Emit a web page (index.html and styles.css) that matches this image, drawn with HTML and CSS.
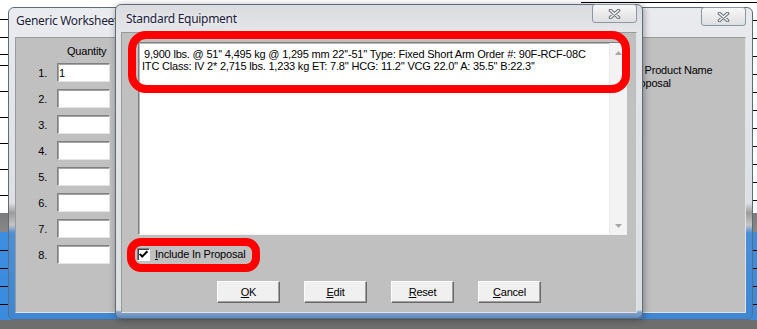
FILE: index.html
```html
<!DOCTYPE html>
<html lang="en">
<head>
  <meta charset="UTF-8" />
  <title>Standard Equipment</title>
  <meta name="viewport" content="width=device-width, initial-scale=1.0" />
  <link rel="stylesheet" href="styles.css">
</head>
<body>
  <div class="desktop">
    <div class="grid grid-left"></div>
    <div class="grid grid-right"></div>
    <div class="topline"></div>

    <!-- window behind -->
    <div class="window worksheet-win">
      <div class="titlebar">
        <span class="title">Generic Worksheet</span>
        <button class="close-btn">
          <svg width="13" height="10" viewBox="0 0 13 10"><path d="M2.5 1.5 L10.5 8.5 M10.5 1.5 L2.5 8.5" stroke="#6a7079" stroke-width="3.6" stroke-linecap="round"/><path d="M2.5 1.5 L10.5 8.5 M10.5 1.5 L2.5 8.5" stroke="#f4f4f4" stroke-width="1.6" stroke-linecap="round"/></svg>
        </button>
      </div>
      <div class="client worksheet">
        <div class="qty-col">
          <div class="qty-head">Quantity</div>
          <div class="qty-row"><span class="num">1.</span><input class="field" type="text" value="1"></div>
          <div class="qty-row"><span class="num">2.</span><input class="field" type="text"></div>
          <div class="qty-row"><span class="num">3.</span><input class="field" type="text"></div>
          <div class="qty-row"><span class="num">4.</span><input class="field" type="text"></div>
          <div class="qty-row"><span class="num">5.</span><input class="field" type="text"></div>
          <div class="qty-row"><span class="num">6.</span><input class="field" type="text"></div>
          <div class="qty-row"><span class="num">7.</span><input class="field" type="text"></div>
          <div class="qty-row"><span class="num">8.</span><input class="field" type="text"></div>
        </div>
        <div class="opts">Show Product Name in Proposal</div>
      </div>
    </div>

    <!-- active dialog -->
    <div class="window equip-win">
      <div class="titlebar">
        <span class="title">Standard Equipment</span>
        <button class="close-btn">
          <svg width="13" height="10" viewBox="0 0 13 10"><path d="M2.5 1.5 L10.5 8.5 M10.5 1.5 L2.5 8.5" stroke="#6a7079" stroke-width="3.6" stroke-linecap="round"/><path d="M2.5 1.5 L10.5 8.5 M10.5 1.5 L2.5 8.5" stroke="#f4f4f4" stroke-width="1.6" stroke-linecap="round"/></svg>
        </button>
      </div>
      <div class="client equip">
        <div class="memo">
          <div class="memo-text">
            <div class="line first">9,900 lbs. @ 51'' 4,495 kg @ 1,295 mm 22''-51'' Type: Fixed Short Arm Order #: 90F-RCF-08C</div>
            <div class="line">ITC Class: IV 2* 2,715 lbs. 1,233 kg ET: 7.8'' HCG: 11.2'' VCG 22.0'' A: 35.5'' B:22.3''</div>
          </div>
          <div class="memo-scroll">
            <svg width="7" height="4" viewBox="0 0 7 4"><polygon points="3.5,0 7,4 0,4" fill="#a6a6a6"/></svg>
            <svg width="7" height="4" viewBox="0 0 7 4"><polygon points="0,0 7,0 3.5,4" fill="#a6a6a6"/></svg>
          </div>
        </div>
        <label class="check-row">
          <span class="check-box">
            <svg width="11" height="11" viewBox="0 0 11 11"><path d="M1.8 4.8 L4.2 7.6 L9.4 2.2" fill="none" stroke="#000" stroke-width="2"/></svg>
          </span>
          <span><u>I</u>nclude In Proposal</span>
        </label>
        <div class="btn-row">
          <button class="btn"><u>O</u>K</button>
          <button class="btn"><u>E</u>dit</button>
          <button class="btn"><u>R</u>eset</button>
          <button class="btn"><u>C</u>ancel</button>
        </div>
      </div>
    </div>

    <!-- red annotation marks -->
    <div class="mark mark-memo"></div>
    <div class="mark mark-check"></div>
  </div>
</body>
</html>
```

FILE: styles.css
```css
* {
  box-sizing: border-box;
  margin: 0;
  padding: 0;
}

body {
  width: 757px;
  height: 329px;
  overflow: hidden;
  font-family: "Liberation Sans", Arial, sans-serif;
  font-size: 11px;
  letter-spacing: -0.2px;
  color: #000;
}

.desktop {
  position: relative;
  width: 757px;
  height: 329px;
  background: linear-gradient(to bottom,
    #ffffff 0, #ffffff 213px,
    #7b7b7b 213px, #888888 232px,
    #3d8ee0 232px, #3a8ade 320px,
    #6e6e6e 320px, #6e6e6e 100%);
}

/* table lines of the app behind */
.grid {
  position: absolute;
  top: 0;
  height: 320px;
}

.grid-left {
  left: 0;
  width: 8px;
  background:
    linear-gradient(#000, #000) 0 19px / 100% 1px no-repeat,
    linear-gradient(#000, #000) 0 37px / 100% 1px no-repeat,
    linear-gradient(#000, #000) 0 54px / 100% 1px no-repeat,
    repeating-linear-gradient(to bottom, #000 0 1px, transparent 1px 26px) 0 65px / 100% 140px no-repeat,
    repeating-linear-gradient(to bottom, transparent 0 17px, #000 17px 18px) 0 233px / 100% 87px no-repeat;
}

.grid-right {
  left: 752px;
  width: 5px;
  background:
    repeating-linear-gradient(to bottom, #000 0 1px, transparent 1px 18px) 0 2px / 100% 205px no-repeat,
    repeating-linear-gradient(to bottom, transparent 0 17px, #000 17px 18px) 0 233px / 100% 87px no-repeat;
}

.topline {
  position: absolute;
  left: 581px;
  top: 2px;
  width: 176px;
  height: 1px;
  background: #000;
}

/* Aero basic style windows */
.window {
  position: absolute;
  display: flex;
  flex-direction: column;
  border: 1px solid #5f6b79;
  border-radius: 6px;
}

.worksheet-win {
  left: 8px;
  top: 7px;
  width: 745px;
  height: 313px;
  padding: 0 6px 6px;
  background: linear-gradient(to bottom,
    #e9ebee 0, #dcdfe3 195px,
    #9c9c9c 205px, #c4c4c4 217px,
    #4b8fd6 225px, #3c86d4 100%);
}

.equip-win {
  left: 115px;
  top: 4px;
  width: 528px;
  height: 315px;
  padding: 0 5px 5px;
  background: linear-gradient(to bottom,
    #d9dbde 0, #e3e5e8 24px, #dcdfe2 calc(100% - 8px),
    #86a3c8 calc(100% - 6px), #5f89bf 100%);
  box-shadow: 1px 1px 7px rgba(0, 0, 0, 0.35);
}

.titlebar {
  display: flex;
  justify-content: space-between;
  align-items: flex-start;
}

.worksheet-win .titlebar {
  height: 29px;
}

.equip-win .titlebar {
  height: 27px;
}

.title {
  font-family: "Noto Sans", "Open Sans", sans-serif;
  font-size: 12px;
  line-height: 16px;
  letter-spacing: -0.3px;
  color: #1c1c3c;
  text-shadow: 0 0 5px #fff;
}

.worksheet-win .title {
  padding: 5px 0 0 1px;
}

.equip-win .title {
  padding: 6px 0 0 5px;
}

.close-btn {
  width: 45px;
  height: 19px;
  margin-top: -1px;
  border: 1px solid #8d96a2;
  border-radius: 3px;
  background: linear-gradient(to bottom, #f7f7f7, #dedfe1);
  display: flex;
  align-items: center;
  justify-content: center;
}

.client {
  flex: 1;
  background-color: #c0c0c0;
  border: 1px solid;
  border-color: #9a9a9a #e2e2e2 #e2e2e2 #9a9a9a;
}

/* worksheet behind */
.worksheet {
  display: flex;
}

.qty-col {
  width: 94px;
  padding: 6px 0 0 21px;
}

.qty-head {
  line-height: 14px;
  margin: 0 0 5px 30px;
}

.qty-row {
  display: flex;
  align-items: center;
  height: 19px;
  margin-bottom: 7px;
}

.num {
  width: 20px;
  padding-right: 10px;
  text-align: right;
}

.field {
  width: 53px;
  height: 19px;
  padding: 0 1px;
  font: inherit;
  letter-spacing: inherit;
  background: #fff;
  border: 1px solid;
  border-color: #808080 #e4e4e4 #e4e4e4 #808080;
  box-shadow: inset 1px 1px 0 #a4a4a4;
  outline: none;
}

.opts {
  width: 104px;
  margin-left: 508px;
  padding-top: 26px;
  line-height: 13px;
  text-indent: -3px;
}

/* standard equipment dialog */
.equip {
  display: flex;
  flex-direction: column;
  padding: 9px 9px 0 16px;
}

.memo {
  display: flex;
  height: 193px;
  background: #fff;
  border: 1px solid;
  border-color: #7f7f7f #f2f2f2 #f2f2f2 #7f7f7f;
  box-shadow: inset 1px 1px 0 #b8b8b8;
}

.memo-text {
  flex: 1;
  padding: 5px 0 0 3px;
  line-height: 12px;
  white-space: nowrap;
}

.memo-text .first {
  padding-left: 2px;
}

.memo-scroll {
  width: 17px;
  padding: 8px 0 6px;
  background: #f3f3f3;
  border-left: 1px solid #e9e9e9;
  display: flex;
  flex-direction: column;
  justify-content: space-between;
  align-items: center;
}

.check-row {
  display: flex;
  align-items: center;
  gap: 5px;
  height: 13px;
  margin: 13px 0 0 -1px;
  line-height: 13px;
}

.check-box {
  width: 13px;
  height: 13px;
  background: #fff;
  border: 1px solid;
  border-color: #808080 #fff #fff #808080;
  box-shadow: inset 1px 1px 0 #404040;
  display: flex;
  align-items: center;
  justify-content: center;
}

.btn-row {
  display: flex;
  gap: 24px;
  margin: 20px 0 0 79px;
}

.btn {
  width: 63px;
  height: 22px;
  font: inherit;
  letter-spacing: inherit;
  color: #000;
  background: #f0f0f0;
  border: 1px solid;
  border-color: #fcfcfc #696969 #696969 #fcfcfc;
  box-shadow: inset -1px -1px 0 #a0a0a0;
}

/* red highlight marks drawn over the screenshot */
.mark {
  position: absolute;
  border: 8px solid #ff0000;
}

.mark-memo {
  left: 128px;
  top: 31px;
  width: 502px;
  height: 62px;
  border-radius: 18px;
}

.mark-check {
  left: 127px;
  top: 238px;
  width: 133px;
  height: 34px;
  border-radius: 14px;
}
```
